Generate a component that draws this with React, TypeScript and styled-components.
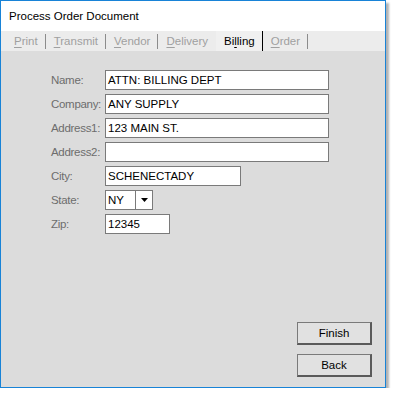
import React from 'react'
import styled, { createGlobalStyle } from 'styled-components'

const GlobalStyle = createGlobalStyle`
  body {
    margin: 0;
    background: #ffffff;
    font-family: 'Liberation Sans', Arial, sans-serif;
  }
`

const Window = styled.div`
  width: 386px;
  height: 388px;
  box-sizing: border-box;
  border: 1px solid #1883d7;
  box-shadow: 3px 3px 2px rgba(0, 0, 0, 0.3);
  display: flex;
  flex-direction: column;
  background: #dcdcdc;
`

const TitleBar = styled.div`
  height: 30px;
  display: flex;
  align-items: center;
  padding-left: 8px;
  background: #ffffff;
  color: #000000;
  font-size: 11.5px;
`

const TabStrip = styled.div`
  height: 20px;
  display: flex;
  align-items: stretch;
  padding-left: 5px;
  background: #ececec;
  font-size: 11.5px;
`

const Tab = styled.div<{ $active?: boolean; $hideSep?: boolean }>`
  display: flex;
  align-items: center;
  padding-left: 8px;
  color: ${props => (props.$active ? '#000000' : '#a0a0a0')};
  background: ${props => (props.$active ? '#f0f0f0' : 'transparent')};
  &::after {
    content: '';
    width: 1px;
    height: ${props => (props.$active ? '20px' : '15px')};
    margin-left: 7px;
    background: ${props => (props.$active ? '#000000' : props.$hideSep ? 'transparent' : '#8c8c8c')};
  }
  u {
    text-decoration: underline;
    text-underline-offset: 2px;
  }
`

const Body = styled.div`
  flex: 1;
  display: flex;
  flex-direction: column;
  padding: 19px 13px 10px 50px;
`

const Form = styled.div`
  display: grid;
  grid-template-columns: 54px auto;
  grid-auto-rows: 20px;
  row-gap: 4px;
  font-size: 11.5px;
`

const Label = styled.div`
  display: flex;
  align-items: center;
  white-space: nowrap;
  letter-spacing: -0.3px;
  color: #6d6d6d;
`

const Field = styled.div<{ $width: number }>`
  width: ${props => props.$width}px;
  height: 20px;
  box-sizing: border-box;
  border: 1px solid #7a7a7a;
  background: #ffffff;
  color: #000000;
  display: flex;
  align-items: center;
  padding-left: 2px;
`

const Select = styled.div`
  width: 48px;
  height: 20px;
  box-sizing: border-box;
  border: 1px solid #7a7a7a;
  background: #ffffff;
  display: flex;
  align-items: stretch;
`

const SelectValue = styled.div`
  flex: 1;
  display: flex;
  align-items: center;
  padding-left: 2px;
  color: #000000;
`

const SelectArrow = styled.div`
  width: 16px;
  border-left: 1px solid #7a7a7a;
  display: flex;
  align-items: center;
  justify-content: center;
`

const ButtonColumn = styled.div`
  margin-top: auto;
  align-self: flex-end;
  display: flex;
  flex-direction: column;
  gap: 9px;
`

const Button = styled.button`
  width: 75px;
  height: 23px;
  box-sizing: border-box;
  border: 1px solid #7a7a7a;
  border-right: 2px solid #5a5a5a;
  border-bottom: 2px solid #5a5a5a;
  background: #e1e1e1;
  color: #000000;
  font-family: 'Liberation Sans', Arial, sans-serif;
  font-size: 11.5px;
  padding: 0;
`

const tabs = [
  { pre: '', key: 'P', rest: 'rint' },
  { pre: '', key: 'T', rest: 'ransmit' },
  { pre: '', key: 'V', rest: 'endor' },
  { pre: '', key: 'D', rest: 'elivery', hideSep: true },
  { pre: 'Bi', key: 'l', rest: 'ling', active: true },
  { pre: '', key: 'O', rest: 'rder' }
]

const fields = [
  { label: 'Name:', value: 'ATTN: BILLING DEPT', width: 224 },
  { label: 'Company:', value: 'ANY SUPPLY', width: 224 },
  { label: 'Address1:', value: '123 MAIN ST.', width: 224 },
  { label: 'Address2:', value: '', width: 224 },
  { label: 'City:', value: 'SCHENECTADY', width: 136 }
]

const App: React.FC = () => {
  return (
    <>
      <GlobalStyle />
      <Window>
        <TitleBar>Process Order Document</TitleBar>
        <TabStrip>
          {tabs.map(t => (
            <Tab key={t.key + t.rest} $active={t.active} $hideSep={t.hideSep}>
              <span>
                {t.pre}
                <u>{t.key}</u>
                {t.rest}
              </span>
            </Tab>
          ))}
        </TabStrip>
        <Body>
          <Form>
            {fields.map(f => (
              <React.Fragment key={f.label}>
                <Label>{f.label}</Label>
                <Field $width={f.width}>{f.value}</Field>
              </React.Fragment>
            ))}
            <Label>State:</Label>
            <Select>
              <SelectValue>NY</SelectValue>
              <SelectArrow>
                <svg width={7} height={4} viewBox="0 0 7 4">
                  <path d="M0 0 H7 L3.5 4 Z" fill="#000" />
                </svg>
              </SelectArrow>
            </Select>
            <Label>Zip:</Label>
            <Field $width={65}>12345</Field>
          </Form>
          <ButtonColumn>
            <Button>Finish</Button>
            <Button>Back</Button>
          </ButtonColumn>
        </Body>
      </Window>
    </>
  )
}

export default App
